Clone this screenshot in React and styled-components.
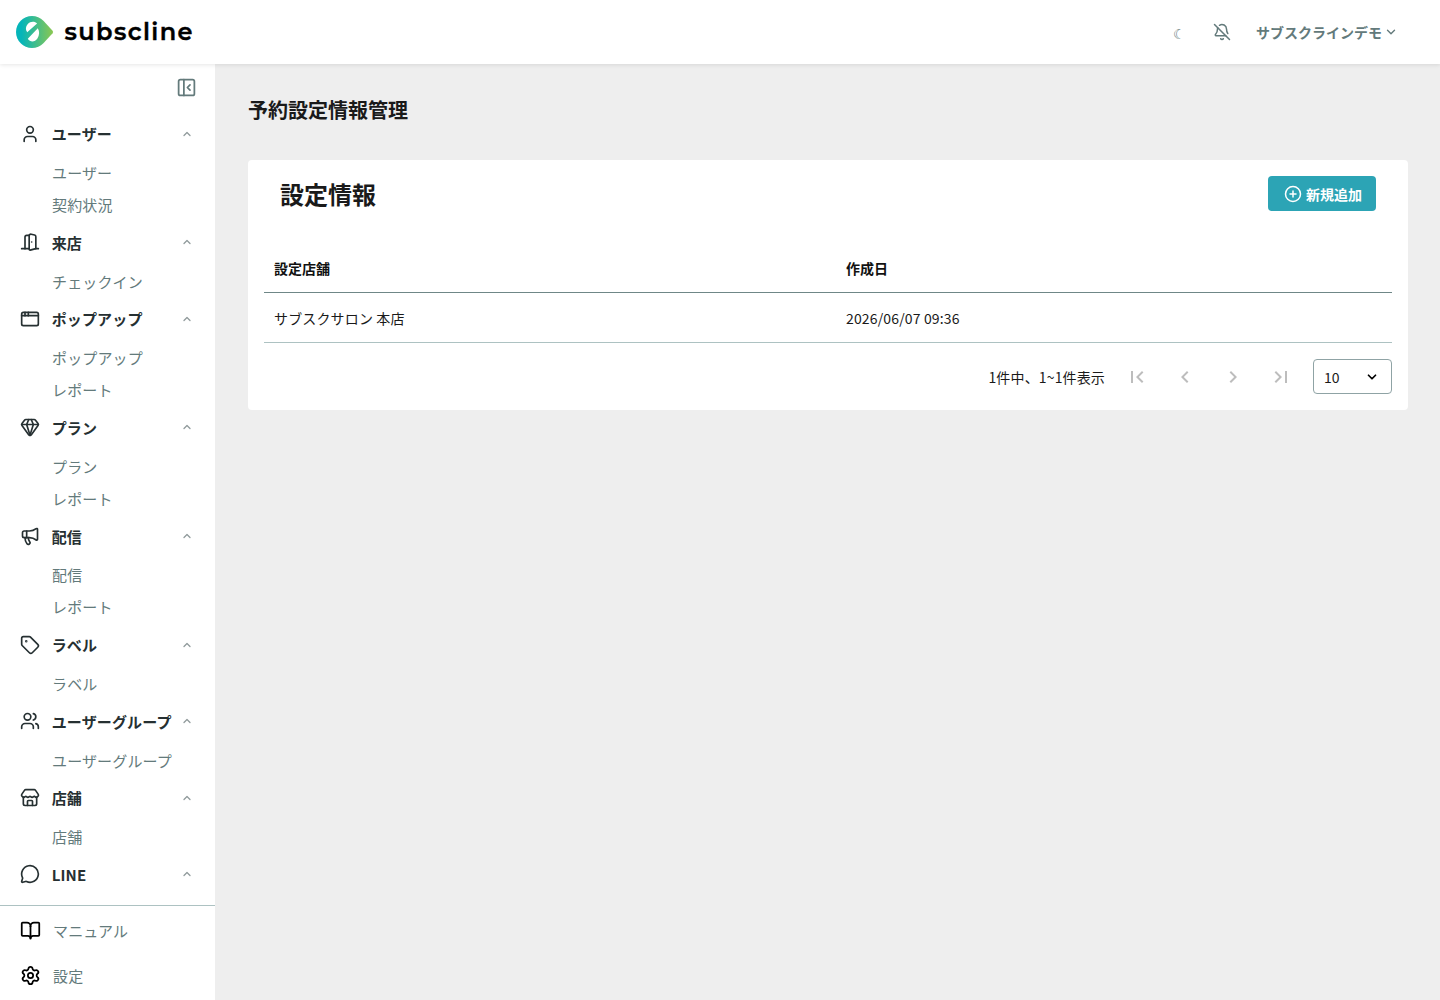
import styled, { createGlobalStyle } from "styled-components";
import {
  AppWindow,
  BellOff,
  BookOpen,
  ChevronDown,
  ChevronUp,
  CirclePlus,
  DoorOpen,
  Gem,
  Megaphone,
  MessageCircle,
  PanelLeftClose,
  Settings,
  Store,
  Tag,
  User,
  Users,
} from "lucide-react";
import {
  MdChevronLeft,
  MdChevronRight,
  MdFirstPage,
  MdLastPage,
} from "react-icons/md";

const GlobalStyle = createGlobalStyle`
  * {
    box-sizing: border-box;
  }

  body {
    margin: 0;
    background: #eee;
    color: #1a1a1a;
    font-family: "Noto Sans CJK JP", sans-serif;
    font-size: 14px;
  }

  button {
    padding: 0;
    border: none;
    background: none;
    color: inherit;
    font-family: inherit;
  }

  svg {
    display: block;
    flex-shrink: 0;
  }
`;

const Page = styled.div`
  display: flex;
  flex-direction: column;
  height: 100vh;
  overflow: hidden;
`;

const Header = styled.header`
  position: relative;
  z-index: 1;
  display: flex;
  align-items: center;
  justify-content: space-between;
  flex-shrink: 0;
  height: 64px;
  padding: 0 42px 0 16px;
  background: #fff;
  box-shadow: 0 1px 4px rgba(0, 0, 0, 0.1);
`;

const HeaderRight = styled.div`
  display: flex;
  align-items: center;
  color: #637a7b;
`;

const ThemeButton = styled.button`
  width: 12px;
  margin-right: 28px;
  padding-top: 3px;
  font-family: "DejaVu Sans", sans-serif;
  font-size: 14px;
  line-height: 20px;
`;

const AccountButton = styled.button`
  display: flex;
  align-items: center;
  gap: 2px;
  margin-left: 25px;
  font-size: 14px;
  font-weight: 700;
`;

const Body = styled.div`
  display: flex;
  flex: 1;
  min-height: 0;
`;

const Sidebar = styled.aside`
  display: flex;
  flex-direction: column;
  width: 215px;
  background: #fff;
`;

const SidebarTop = styled.div`
  display: flex;
  justify-content: flex-end;
  flex-shrink: 0;
  height: 47.4px;
  padding: 13px 18px 0 0;
  color: #637a7b;
`;

const Nav = styled.nav`
  flex: 1;
  min-height: 0;
  overflow: hidden;
  letter-spacing: 0.01em;
`;

const NavTitle = styled.div`
  display: flex;
  align-items: center;
  height: 44.6px;
  padding: 0 22px 0 20px;
  color: #263032;
  font-size: 15px;
  font-weight: 700;
`;

const NavLabel = styled.span`
  flex: 1;
  margin-left: 11.7px;
  white-space: nowrap;
`;

const NavItem = styled.a`
  display: block;
  height: 32px;
  padding-left: 52px;
  color: #637a7b;
  font-size: 15px;
  line-height: 33.1px;
`;

const SidebarBottom = styled.div`
  flex-shrink: 0;
  height: 95px;
  padding-top: 2px;
  border-top: 1px solid #adc2c2;
  letter-spacing: 0.01em;
`;

const BottomLink = styled.a`
  display: flex;
  align-items: center;
  gap: 12px;
  height: 45px;
  padding-left: 20px;
  color: #637a7b;
  font-size: 15px;

  svg {
    color: #000;
  }
`;

const Main = styled.main`
  flex: 1;
  padding: 32px 32px 32px 33px;
`;

const PageTitle = styled.h1`
  margin: 0 0 36px;
  font-size: 20px;
  line-height: 28px;
`;

const Card = styled.section`
  height: 250px;
  padding: 16px;
  border-radius: 4px;
  background: #fff;
`;

const CardHeader = styled.div`
  display: flex;
  align-items: flex-start;
  justify-content: space-between;
  height: 68px;
  padding: 0 16px;
`;

const CardTitle = styled.h2`
  margin: 0;
  font-size: 24px;
  line-height: 36px;
`;

const AddButton = styled.button`
  display: flex;
  align-items: center;
  justify-content: center;
  gap: 4px;
  width: 108px;
  height: 35px;
  padding-left: 2px;
  border-radius: 4px;
  background: #2ca4b5;
  color: #fff;
  font-size: 14px;
  font-weight: 700;
`;

const Table = styled.table`
  width: 100%;
  border-collapse: separate;
  border-spacing: 0;
  table-layout: fixed;
`;

const Th = styled.th`
  width: ${(props) => props.$width};
  height: 49px;
  padding: 0 10px 1px;
  border-bottom: 1px solid #6f8787;
  color: #111;
  font-size: 14px;
  text-align: left;
`;

const Td = styled.td`
  height: 50px;
  padding: 0 10px;
  border-bottom: 1px solid #adc2c2;
  font-size: 14px;
  letter-spacing: 0.0107em;
`;

const Pagination = styled.div`
  display: flex;
  align-items: center;
  justify-content: flex-end;
  height: 35px;
  margin-top: 16px;
`;

const PageInfo = styled.span`
  margin-right: 7.5px;
  letter-spacing: 0.0107em;
`;

const PageButton = styled.button`
  display: flex;
  align-items: center;
  justify-content: center;
  width: 48px;
  height: 35px;
  color: #bdbdbd;
`;

const PageSize = styled.div`
  display: flex;
  align-items: center;
  justify-content: space-between;
  width: 79px;
  height: 35px;
  margin-left: 8.5px;
  padding: 0 12px 0 10px;
  border: 1px solid #8fa3a5;
  border-radius: 4px;
`;

const Wordmark = styled.text`
  fill: #000;
  stroke: #000;
  stroke-width: 0.4px;
  font-family: Montserrat, "Noto Sans", sans-serif;
  font-size: 24px;
  font-weight: 600;
`;

const Logo = () => (
  <svg width="177" height="36" viewBox="0 0 177 36">
    <defs>
      <linearGradient id="logo" x1="0" y1="0" x2="1" y2="0">
        <stop offset="0.15" stopColor="#05b5b9" />
        <stop offset="1" stopColor="#8bc751" />
      </linearGradient>
    </defs>
    <path
      d="M16 2C7.2 2 0 9.2 0 18s7.2 16 16 16c4.5 0 8.5-1.8 11.4-4.8L36.600 19.200q1-1.200 0-2.400L27.400 6.800A16 16 0 0 0 16 2z"
      fill="url(#logo)"
    />
    <path
      d="M11.200 18.200C9.300 16 9.500 12.500 11.800 10c2.400-2.700 7-2.900 9.300-.5zM21.800 14.300c2 3 1.600 7.200-.4 10.200-2.500 3.700-7.200 4-9.600.2z"
      fill="#fff"
    />
    <Wordmark x="48.5" y="25.5" textLength="128">
      subscline
    </Wordmark>
  </svg>
);

const menus = [
  { title: "ユーザー", icon: User, items: ["ユーザー", "契約状況"] },
  { title: "来店", icon: DoorOpen, items: ["チェックイン"] },
  { title: "ポップアップ", icon: AppWindow, items: ["ポップアップ", "レポート"] },
  { title: "プラン", icon: Gem, items: ["プラン", "レポート"] },
  { title: "配信", icon: Megaphone, items: ["配信", "レポート"] },
  { title: "ラベル", icon: Tag, items: ["ラベル"] },
  { title: "ユーザーグループ", icon: Users, items: ["ユーザーグループ"] },
  { title: "店舗", icon: Store, items: ["店舗"] },
  { title: "LINE", icon: MessageCircle, items: [] },
];

function App() {
  return (
    <Page>
      <GlobalStyle />
      <Header>
        <Logo />
        <HeaderRight>
          <ThemeButton>☾</ThemeButton>
          <BellOff size={18} />
          <AccountButton>
            サブスクラインデモ
            <ChevronDown size={14} strokeWidth={2.4} />
          </AccountButton>
        </HeaderRight>
      </Header>

      <Body>
        <Sidebar>
          <SidebarTop>
            <PanelLeftClose size={21} />
          </SidebarTop>
          <Nav>
            {menus.map(({ title, icon: Icon, items }) => (
              <div key={title}>
                <NavTitle>
                  <Icon size={20} />
                  <NavLabel>{title}</NavLabel>
                  <ChevronUp size={12} strokeWidth={2.6} color="#919b9c" />
                </NavTitle>
                {items.map((item) => (
                  <NavItem key={item}>{item}</NavItem>
                ))}
              </div>
            ))}
          </Nav>
          <SidebarBottom>
            <BottomLink>
              <BookOpen size={21} />
              マニュアル
            </BottomLink>
            <BottomLink>
              <Settings size={21} />
              設定
            </BottomLink>
          </SidebarBottom>
        </Sidebar>

        <Main>
          <PageTitle>予約設定情報管理</PageTitle>
          <Card>
            <CardHeader>
              <CardTitle>設定情報</CardTitle>
              <AddButton>
                <CirclePlus size={18} />
                新規追加
              </AddButton>
            </CardHeader>
            <Table>
              <thead>
                <tr>
                  <Th $width="572px">設定店舗</Th>
                  <Th>作成日</Th>
                </tr>
              </thead>
              <tbody>
                <tr>
                  <Td>サブスクサロン 本店</Td>
                  <Td>2026/06/07 09:36</Td>
                </tr>
              </tbody>
            </Table>
            <Pagination>
              <PageInfo>1件中、1~1件表示</PageInfo>
              <PageButton>
                <MdFirstPage size={24} />
              </PageButton>
              <PageButton>
                <MdChevronLeft size={24} />
              </PageButton>
              <PageButton>
                <MdChevronRight size={24} />
              </PageButton>
              <PageButton>
                <MdLastPage size={24} />
              </PageButton>
              <PageSize>
                10
                <ChevronDown size={14} strokeWidth={3} color="#000" />
              </PageSize>
            </Pagination>
          </Card>
        </Main>
      </Body>
    </Page>
  );
}

export default App;
